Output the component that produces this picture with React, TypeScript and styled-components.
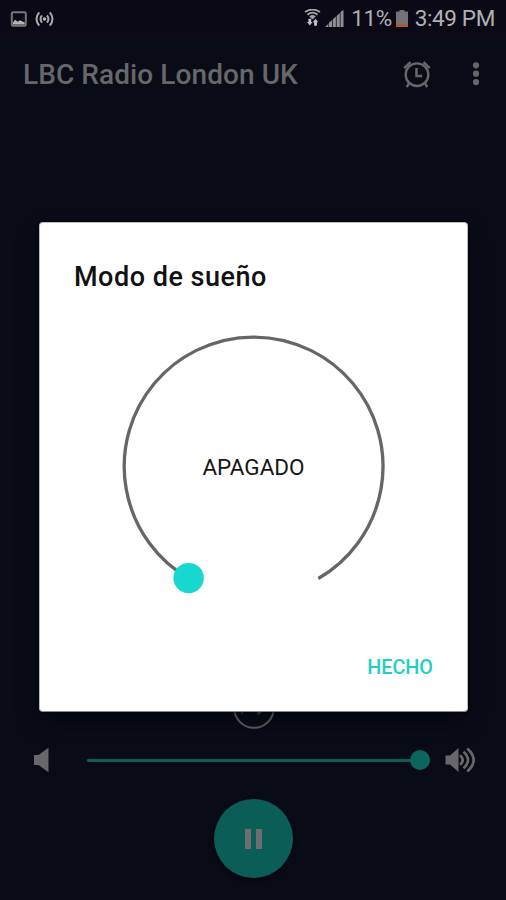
import React from "react";
import styled, { createGlobalStyle } from "styled-components";

const GlobalStyle = createGlobalStyle`
  * { box-sizing: border-box; }
  body { margin: 0; background: #090b17; }
`;

const Screen = styled.main`
  position: relative;
  display: flex;
  flex-direction: column;
  width: 506px;
  height: 900px;
  overflow: hidden;
  background: #090b17;
  font-family: Roboto, "Liberation Sans", sans-serif;
`;

const StatusBar = styled.header`
  display: flex;
  align-items: center;
  justify-content: space-between;
  height: 37px;
  padding: 0 11px 0 10px;
  background: #0b0915;
  color: #b1b1b4;
`;

const StatusGroup = styled.div`
  display: flex;
  align-items: center;
`;

const StatusText = styled.span<{ $tracking?: number }>`
  font-size: 22.5px;
  line-height: 37px;
  white-space: nowrap;
  letter-spacing: ${({ $tracking = 0 }) => $tracking}px;
`;

const Icon = styled.svg<{ $left?: number; $right?: number }>`
  display: block;
  flex: none;
  margin-left: ${({ $left = 0 }) => $left}px;
  margin-right: ${({ $right = 0 }) => $right}px;
`;

const AppBar = styled.nav`
  display: flex;
  align-items: center;
  height: 75px;
  padding: 0 23px;
  color: #67676a;
`;

const AppTitle = styled.h1`
  flex: 1;
  margin: 0;
  font-size: 28px;
  font-weight: 500;
  letter-spacing: 0.08px;
  white-space: nowrap;
`;

const BarButton = styled.button`
  display: flex;
  padding: 0;
  border: 0;
  background: none;
  color: inherit;
`;

const Player = styled.section`
  display: flex;
  flex: 1;
  flex-direction: column;
  align-items: center;
  justify-content: flex-end;
  padding-bottom: 22px;
`;

const VolumeRow = styled.div`
  display: flex;
  align-items: center;
  width: 100%;
  height: 40px;
  margin-top: 11px;
  padding: 0 30px 0 33px;
  color: #68686b;
`;

const Track = styled.div`
  display: flex;
  flex: 1;
  align-items: center;
  justify-content: flex-end;
  height: 3px;
  margin: 0 14px 0 37px;
  border-radius: 1px;
  background: #0d5d55;
`;

const TrackKnob = styled.span`
  flex: none;
  width: 20px;
  height: 20px;
  border-radius: 50%;
  background: #0c665d;
`;

const PauseButton = styled.button`
  display: flex;
  align-items: center;
  justify-content: center;
  gap: 5px;
  width: 79px;
  height: 79px;
  margin-top: 19px;
  padding: 0;
  border: 0;
  border-radius: 50%;
  background: #0a5e57;
  box-shadow: 0 4px 6px rgba(0, 0, 0, 0.4);
`;

const PauseBar = styled.span`
  width: 6px;
  height: 20px;
  background: #6e6e71;
`;

const Dialog = styled.section`
  position: absolute;
  top: 222px;
  left: 39px;
  display: flex;
  flex-direction: column;
  width: 429px;
  height: 490px;
  padding: 38px 34px 29px;
  border: 1px solid #bcbcbc;
  border-bottom-color: #8a8a8c;
  border-radius: 4px;
  background: #fff;
  box-shadow: 0 0 3px #000, 0 10px 22px 4px rgba(0, 0, 0, 0.3);
`;

const DialogTitle = styled.h2`
  margin: 0;
  color: #111;
  font-size: 27px;
  font-weight: 500;
  line-height: 32px;
  letter-spacing: 0.5px;
  white-space: nowrap;
`;

const Dial = styled.div`
  position: relative;
  display: flex;
  align-items: center;
  justify-content: center;
  align-self: center;
  width: 265px;
  height: 264px;
  margin-top: 41px;
`;

const DialArc = styled.svg`
  position: absolute;
  inset: 0;
  overflow: visible;
`;

const DialValue = styled.span`
  padding-top: 2px;
  color: #161616;
  font-size: 22.5px;
  line-height: 28px;
`;

const DoneButton = styled.button`
  align-self: flex-end;
  margin-top: auto;
  padding: 0;
  border: 0;
  background: none;
  color: #22cfc2;
  font: 500 19.8px/28px Roboto, sans-serif;
`;

export default function App() {
  return (
    <Screen>
      <GlobalStyle />
      <StatusBar>
        <StatusGroup>
          <Icon width="17" height="16" viewBox="0 0 17 16">
            <rect x="1.8" y="1.3" width="14" height="13.4" rx="1.2" fill="none" stroke="#777779" strokeWidth="2" />
            <path d="M3 11.5l2.2-2.8 2.5 2 2.2-1.5 4.8 2.4v2H3z" fill="#b5b5b7" />
          </Icon>
          <Icon width="19" height="16" viewBox="0 0 19 16" $left={7.5} fill="none" stroke="#aaaaad" strokeWidth="2">
            <path d="M4.2 1.4Q-1.2 8 4.2 14.6M7 4.3Q4.1 8 7 11.7M14.8 1.4Q20.2 8 14.8 14.6M12 4.3Q14.9 8 12 11.7" />
            <circle cx="9.5" cy="8" r="1.8" fill="#b5b5b8" stroke="none" />
          </Icon>
        </StatusGroup>
        <StatusGroup>
          <Icon width="17" height="20" viewBox="0 0 17 20" $right={4}>
            <g fill="none" stroke="#a3a3a6" strokeWidth="1.8">
              <path d="M1 3Q8.5-2 16 3M3.5 5.8Q8.5 1.5 13.5 5.8M5.9 8.2Q8.5 5.8 11.1 8.2" />
            </g>
            <circle cx="8.5" cy="8.6" r="1.5" fill="#a3a3a6" />
            <path d="M3 13h1.4V9.8h2.8V13h1.4l-2.8 3.5zM8.8 13.3l2.7-3.5 2.7 3.5h-1.3v3.4h-2.8v-3.4z" fill="#c2c2c5" />
          </Icon>
          <Icon width="19" height="18" viewBox="0 0 19 18" $right={7} fill="#8f8f93">
            <path d="M0 17l3.2-3v3zM3.8 13l3.2-3v7H3.8zM7.7 9.5l3.2-3V17H7.7zM11.6 6l3.2-3v14h-3.2zM15.5 2l3-2v17h-3z" />
          </Icon>
          <StatusText $tracking={-0.5}>11%</StatusText>
          <Icon width="12" height="17" viewBox="0 0 12 17" $left={4.5} $right={6.5}>
            <path d="M3.5 0h5v1.5H12V17H0V1.5h3.5z" fill="#727278" />
            <path d="M0 14h12v2.5H0z" fill="#b85432" />
          </Icon>
          <StatusText $tracking={-0.35}>3:49 PM</StatusText>
        </StatusGroup>
      </StatusBar>

      <AppBar>
        <AppTitle>LBC Radio London UK</AppTitle>
        <BarButton aria-label="Alarma">
          <Icon width="28" height="28" viewBox="0 0 28 28" fill="none" stroke="currentColor" strokeWidth="2.4">
            <circle cx="14" cy="13.7" r="11.3" />
            <path d="M1.2 7.2l6.3-6M26.8 7.2l-6.3-6M6.3 21.7l-2.5 4.5M21.7 21.7l2.5 4.5" />
            <path d="M13.5 7v8h5.6" strokeWidth="2.5" />
          </Icon>
        </BarButton>
        <BarButton aria-label="Más opciones">
          <Icon width="8" height="26" viewBox="0 0 8 26" fill="currentColor" $left={41} $right={3}>
            <circle cx="4" cy="3.3" r="3.1" />
            <circle cx="4" cy="11.7" r="3.1" />
            <circle cx="4" cy="20.1" r="3.1" />
          </Icon>
        </BarButton>
      </AppBar>

      <Player>
        <Icon width="42" height="42" viewBox="0 0 42 42" fill="none" stroke="#606065" strokeWidth="2" $left={2}>
          <circle cx="21" cy="21" r="19.8" />
          <path d="M9 22v-7h21M26 11l4 4-4 4" />
          <path d="M8 24.5h1.5V27H8zM23 22l6 3.500-4 2.5z" fill="#505055" stroke="none" />
        </Icon>
        <VolumeRow>
          <Icon width="17" height="26" viewBox="0 0 17 26" fill="currentColor">
            <path d="M1 8h4.500L15.5.8v24.4L5.500 18H1z" />
          </Icon>
          <Track>
            <TrackKnob />
          </Track>
          <Icon width="32" height="26" viewBox="0 0 32 26">
            <path d="M1.5 8.5H6L14.5 1v24L6 17.5H1.5z" fill="currentColor" />
            <g fill="none" stroke="currentColor" strokeWidth="2.7">
              <path d="M16 8.2Q21.5 13 16 17.8M19.5 4.7Q28.5 13 19.5 21.3M23.3 1.5Q36 13 23.3 24.5" />
            </g>
          </Icon>
        </VolumeRow>
        <PauseButton aria-label="Pausar">
          <PauseBar />
          <PauseBar />
        </PauseButton>
      </Player>

      <Dialog role="dialog">
        <DialogTitle>Modo de sueño</DialogTitle>
        <Dial>
          <DialArc width="265" height="264" viewBox="0 0 265 264">
            <path d="M67.9 244.5A129.4 129.4 0 1 1 197.3 244.5" fill="none" stroke="#666" strokeWidth="3.3" />
            <circle cx="67.6" cy="244.1" r="15.2" fill="#16d8ce" />
          </DialArc>
          <DialValue>APAGADO</DialValue>
        </Dial>
        <DoneButton>HECHO</DoneButton>
      </Dialog>
    </Screen>
  );
}
